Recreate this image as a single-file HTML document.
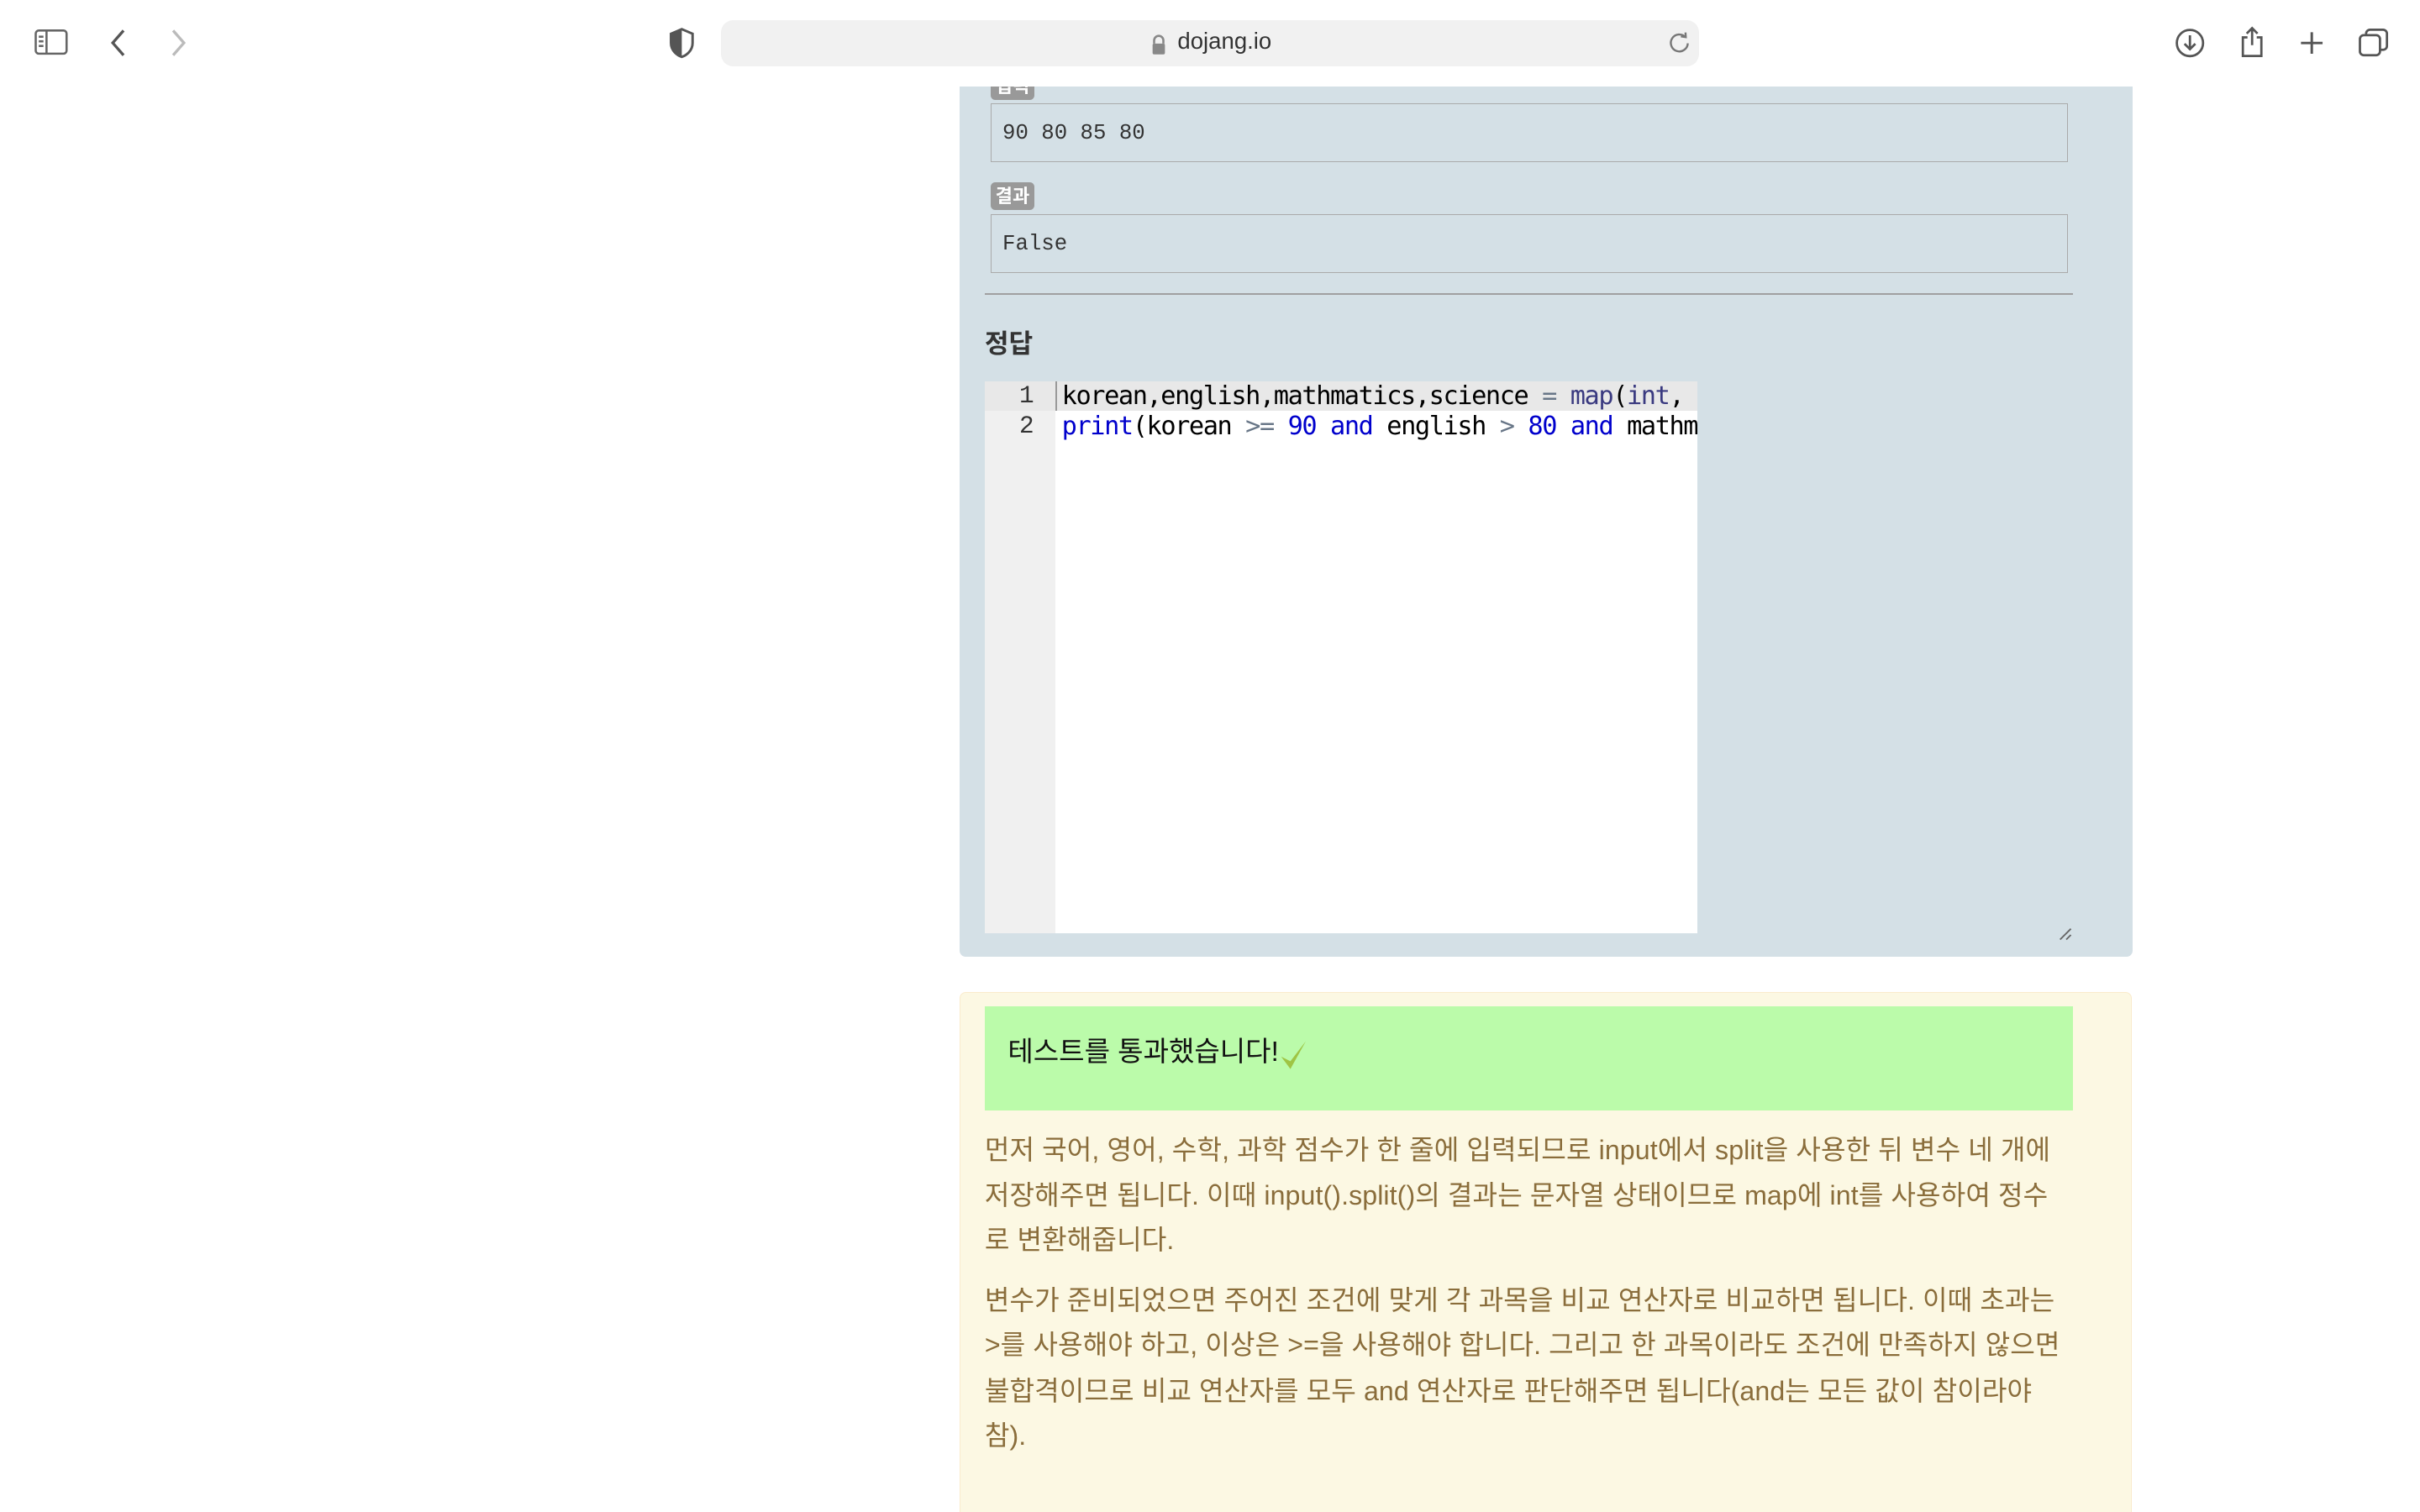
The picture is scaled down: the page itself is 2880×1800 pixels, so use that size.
<!DOCTYPE html>
<html><head><meta charset="utf-8"><style>
html,body{margin:0;padding:0;background:#fff;overflow:hidden}
body{zoom:1.836735;width:1568px;height:980px;position:relative;font-family:"Liberation Sans","Noto Sans CJK KR",sans-serif}
.a{position:absolute}
.mono{font-family:"Liberation Mono","DejaVu Sans Mono",monospace}
.badge{position:absolute;background:#999;color:#fff;font-size:12px;font-weight:bold;border-radius:3px;padding:1px 3px;line-height:16px}
.box{position:absolute;left:642px;width:698px;height:36px;border:1px solid #aaa;font-size:14px;line-height:36px;padding-left:7px;box-sizing:border-box;color:#333}
.ln{position:absolute;white-space:nowrap;font-size:17.5px;color:#8a6d3b;letter-spacing:0.05px}
.code{position:absolute;left:688px;font-size:16.5px;white-space:nowrap;font-family:"DejaVu Sans Mono",monospace;letter-spacing:-0.78px}
.k{color:#00c}.o{color:#687687}.b{color:#3a3a80}
</style></head><body>
<div class="a" style="left:622px;top:56px;width:760px;height:564px;background:#d4e0e6;border-radius:0 0 4px 4px"></div>
<div class="badge" style="left:642px;top:47px">입력</div>
<div class="box mono" style="top:67px;height:38px;line-height:38px">90 80 85 80</div>
<div class="badge" style="left:642px;top:118px">결과</div>
<div class="box mono" style="top:139px;height:38px;line-height:38px">False</div>
<div class="a" style="left:638px;top:190px;width:705px;height:1px;background:#a0a0a0"></div>
<div class="a" style="left:638px;top:209px;font-size:17px;font-weight:bold;color:#333">정답</div>
<div class="a" style="left:638px;top:247px;width:462px;height:358px;background:#fff"></div>
<div class="a" style="left:638px;top:247px;width:46px;height:358px;background:#f0f0f0"></div>
<div class="a" style="left:638px;top:247px;width:462px;height:19px;background:#e8e8e8"></div>
<div class="a" style="left:684px;top:247px;width:1px;height:19px;background:#999"></div>
<div class="a mono" style="left:656px;top:247px;font-size:16px;line-height:20px;color:#333;text-align:right;width:14px">1<br>2</div>
<div style="position:absolute;left:684px;top:247px;width:416px;height:60px;overflow:hidden">
<div class="code" style="left:4px;top:0;line-height:20px">korean,english,mathmatics,science <span class="o">=</span> <span class="b">map</span>(<span class="b">int</span>, input().split())</div>
<div class="code" style="left:4px;top:20px;line-height:20px"><span class="k">print</span>(korean <span class="o">&gt;=</span> <span class="k">90</span> <span class="k">and</span> english <span class="o">&gt;</span> <span class="k">80</span> <span class="k">and</span> mathmatics</div>
</div>
<svg class="a" style="left:1333px;top:600px" width="10" height="10" viewBox="0 0 10 10" stroke="#666" stroke-width="1"><path d="M2 9 L9 2 M6 9 L9 6"/></svg>

<div class="a" style="left:622px;top:643px;width:758px;height:340px;background:#fcf8e3;border:1px solid #faebcc;border-radius:4px"></div>
<div class="a" style="left:638px;top:652px;width:705px;height:68px;background:#bbfbaa"></div>
<div class="a" style="left:653px;top:667px;font-size:18px;color:#111">테스트를 통과했습니다!</div>
<svg class="a" style="left:828px;top:672px" width="20" height="24" viewBox="0 0 20 24"><path d="M2 13 L8 21 L18 3 L8 16 Z" fill="#9fc444"/></svg>
<div class="ln" style="left:638px;top:732px">먼저 국어, 영어, 수학, 과학 점수가 한 줄에 입력되므로 input에서 split을 사용한 뒤 변수 네 개에</div>
<div class="ln" style="left:638px;top:761px">저장해주면 됩니다. 이때 input().split()의 결과는 문자열 상태이므로 map에 int를 사용하여 정수</div>
<div class="ln" style="left:638px;top:790px">로 변환해줍니다.</div>
<div class="ln" style="left:638px;top:829px">변수가 준비되었으면 주어진 조건에 맞게 각 과목을 비교 연산자로 비교하면 됩니다. 이때 초과는</div>
<div class="ln" style="left:638px;top:858px">&gt;를 사용해야 하고, 이상은 &gt;=을 사용해야 합니다. 그리고 한 과목이라도 조건에 만족하지 않으면</div>
<div class="ln" style="left:638px;top:888px">불합격이므로 비교 연산자를 모두 and 연산자로 판단해주면 됩니다(and는 모든 값이 참이라야</div>
<div class="ln" style="left:638px;top:917px">참).</div>

<div class="a" style="left:0;top:0;width:1568px;height:56px;background:#fff"></div>
<svg class="a" style="left:20px;top:16px" width="26" height="24" viewBox="0 0 26 24" fill="none" stroke="#666" stroke-width="1.4"><rect x="3" y="4" width="20" height="15" rx="2"/><line x1="10" y1="4" x2="10" y2="19"/><line x1="5" y1="8" x2="8" y2="8"/><line x1="5" y1="11" x2="8" y2="11"/><line x1="5" y1="14" x2="8" y2="14"/></svg>
<svg class="a" style="left:68px;top:16px" width="18" height="24" viewBox="0 0 18 24" fill="none" stroke="#555" stroke-width="1.8"><path d="M12 4 L5 12 L12 20"/></svg>
<svg class="a" style="left:106px;top:16px" width="18" height="24" viewBox="0 0 18 24" fill="none" stroke="#bbb" stroke-width="1.8"><path d="M6 4 L13 12 L6 20"/></svg>
<svg class="a" style="left:432px;top:17px" width="20" height="22" viewBox="0 0 20 22"><path d="M10 2 L17 5 V11 C17 16 13 19 10 20 C7 19 3 16 3 11 V5 Z" fill="none" stroke="#555" stroke-width="1.6"/><path d="M10 2 V20 C7 19 3 16 3 11 V5 Z" fill="#555"/></svg>
<div class="a" style="left:467px;top:13px;width:634px;height:30px;background:#f1f1f1;border-radius:8px"></div>
<svg class="a" style="left:745px;top:21px" width="12" height="15" viewBox="0 0 12 15"><path d="M3 7 V5 A3 3 0 0 1 9 5 V7" fill="none" stroke="#888" stroke-width="1.4"/><rect x="2" y="7" width="8" height="7" rx="1" fill="#888"/></svg>
<div class="a" style="left:763px;top:18px;font-size:15px;color:#333">dojang.io</div>
<svg class="a" style="left:1079px;top:19px" width="18" height="18" viewBox="0 0 18 18" fill="none" stroke="#777" stroke-width="1.3"><path d="M13 5 A5.5 5.5 0 1 0 14.5 9"/><path d="M10 4.5 L13.2 5 L13 2"/></svg>
<svg class="a" style="left:1408px;top:17px" width="22" height="22" viewBox="0 0 22 22" fill="none" stroke="#555" stroke-width="1.5"><circle cx="11" cy="11" r="8.5"/><path d="M11 6 V15 M7.5 11.5 L11 15 L14.5 11.5"/></svg>
<svg class="a" style="left:1448px;top:15px" width="22" height="24" viewBox="0 0 22 24" fill="none" stroke="#555" stroke-width="1.5"><path d="M8 9 H5 V21 H17 V9 H14"/><path d="M11 3 V14 M7.5 6.5 L11 3 L14.5 6.5"/></svg>
<svg class="a" style="left:1487px;top:17px" width="22" height="22" viewBox="0 0 22 22" stroke="#555" stroke-width="1.6"><path d="M11 4 V18 M4 11 H18"/></svg>
<svg class="a" style="left:1526px;top:16px" width="24" height="24" viewBox="0 0 24 24" fill="none" stroke="#555" stroke-width="1.5"><rect x="3" y="7" width="13" height="13" rx="2.5"/><path d="M7 7 V6 A2.5 2.5 0 0 1 9.5 3.5 H18 A2.5 2.5 0 0 1 20.5 6 V14 A2.5 2.5 0 0 1 18 16.5 H16"/></svg>
</body></html>
